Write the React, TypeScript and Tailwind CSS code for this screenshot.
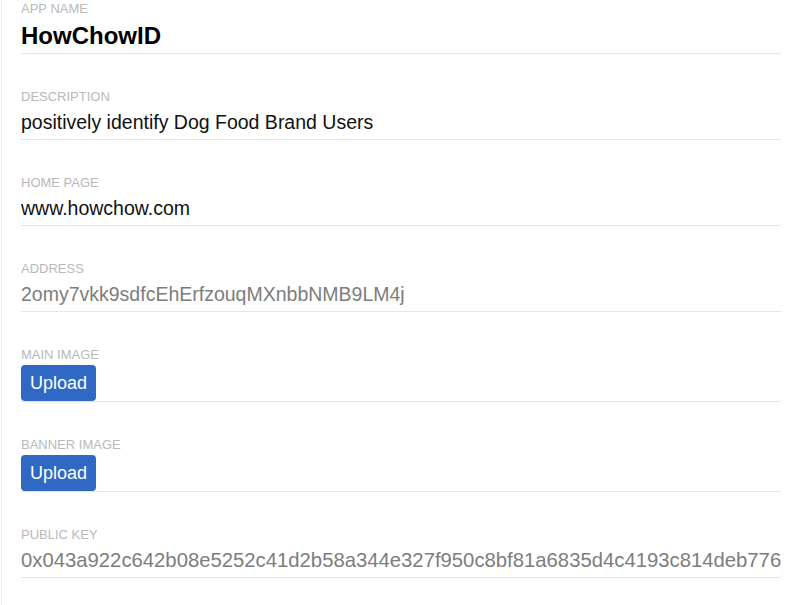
const fields = [
  { label: "App Name", value: "HowChowID", kind: "title" },
  { label: "Description", value: "positively identify Dog Food Brand Users", kind: "text" },
  { label: "Home Page", value: "www.howchow.com", kind: "text" },
  { label: "Address", value: "2omy7vkk9sdfcEhErfzouqMXnbbNMB9LM4j", kind: "muted" },
  { label: "Main Image", value: "", kind: "upload" },
  { label: "Banner Image", value: "", kind: "upload" },
  {
    label: "Public Key",
    value: "0x043a922c642b08e5252c41d2b58a344e327f950c8bf81a6835d4c4193c814deb7766",
    kind: "key",
  },
]

const Label = ({ children }: { children: string }) => (
  <div className="text-[13px] leading-[16px] uppercase text-[#b9b9b9]">{children}</div>
)

const Field = ({ label, value, kind }: { label: string; value: string; kind: string }) => {
  if (kind === "title") {
    return (
      <div className="pt-[1px] border-b border-[#e6e6e6]">
        <Label>{label}</Label>
        <div className="mt-[5px] pb-[3px] text-[24px] leading-[28px] font-bold text-black">{value}</div>
      </div>
    )
  }
  if (kind === "upload") {
    return (
      <div className="mt-[35px] border-b border-[#e6e6e6]">
        <Label>{label}</Label>
        <button className="mt-[2px] h-[36px] px-[9px] rounded-[4px] bg-[#3069c3] text-white text-[18px]">
          Upload
        </button>
      </div>
    )
  }
  return (
    <div className="mt-[35px] border-b border-[#e6e6e6]">
      <Label>{label}</Label>
      <div
        className={`mt-[5px] pb-[5px] leading-[24px] whitespace-nowrap overflow-hidden ${
          kind === "key" ? "text-[20.3px]" : "text-[19.5px]"
        } ${kind === "text" ? "text-[#111]" : "text-[#7d7d7d]"}`}
      >
        {value}
      </div>
    </div>
  )
}

const App = () => {
  return (
    <div className="w-[793px] h-[605px] bg-white pl-[1px] overflow-hidden" style={{ fontFamily: '"Liberation Sans", Arial, sans-serif' }}>
      <div className="h-full border-l border-[#ececec] pl-[19px]">
        <div className="w-[760px] flex flex-col">
          {fields.map((f) => (
            <Field key={f.label} label={f.label} value={f.value} kind={f.kind} />
          ))}
        </div>
      </div>
    </div>
  )
}

export default App
